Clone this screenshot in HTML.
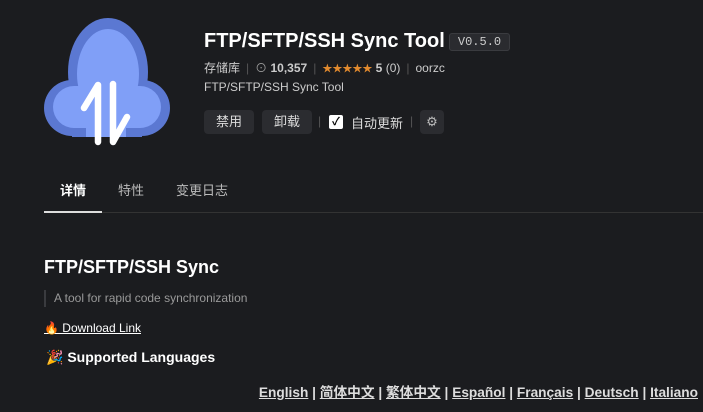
<!DOCTYPE html>
<html><head><meta charset="utf-8"><style>
*{margin:0;padding:0;box-sizing:border-box}
body{width:703px;height:412px;overflow:hidden;background:#1b1c1f;color:#ccc;font-family:"Liberation Sans","Noto Sans CJK SC",sans-serif;position:relative}
.a{position:absolute;white-space:nowrap}
.btn{position:absolute;top:110px;height:24px;background:#2b2c30;border-radius:4px;color:#ddd;font-size:13px;line-height:24px;text-align:center}
.sep{color:#555;margin:0 6px}
</style></head><body>
<svg class="a" style="left:0;top:0" width="200" height="160" viewBox="0 0 200 160">
<g fill="#5b78d2">
<ellipse cx="108" cy="72" rx="40" ry="54"/>
<circle cx="72" cy="108" r="28"/>
<circle cx="142" cy="108" r="28"/>
<rect x="72" y="80" width="70" height="57"/>
</g>
<g fill="#809ff7">
<ellipse cx="108" cy="74" rx="31" ry="45"/>
<circle cx="74" cy="107" r="21"/>
<circle cx="140" cy="107" r="21"/>
<rect x="74" y="86" width="66" height="42"/>
<rect x="86" y="110" width="40" height="27"/>
</g>
<path d="M84 108 L98 85 L98 142 M113 84 L113 142 L127 117" stroke="#fff" stroke-width="6.5" fill="none" stroke-linecap="round" stroke-linejoin="round"/>
</svg>
<div class="a" style="left:204px;top:30px;font-size:20px;font-weight:bold;color:#fff">FTP/SFTP/SSH Sync Tool</div>
<div class="a" style="left:449px;top:33px;width:61px;height:18px;background:#2a2b2f;border:1px solid #3a3b3f;border-radius:3px;font-family:'Liberation Mono',monospace;font-size:12px;line-height:16px;text-align:center;color:#ccc">V0.5.0</div>
<div class="a" style="left:204px;top:59px;font-size:12px;color:#ccc">存储库<span class="sep">|</span><span style="color:#999">⊙</span> <b>10,357</b><span class="sep">|</span><span style="color:#e28a2e;font-size:10px">★★★★★</span> <b>5</b> (0)<span class="sep">|</span>oorzc</div>
<div class="a" style="left:204px;top:80px;font-size:12px;color:#ccc">FTP/SFTP/SSH Sync Tool</div>
<div class="btn" style="left:204px;width:50px">禁用</div>
<div class="btn" style="left:262px;width:50px">卸载</div>
<div class="a" style="left:318px;top:114px;color:#555;font-size:12px">|</div>
<div class="a" style="left:329px;top:115px;width:14px;height:14px;background:#fff;border-radius:2px;color:#000;font-size:11px;line-height:14px;text-align:center;font-weight:bold">✓</div>
<div class="a" style="left:351px;top:113px;font-size:13px;color:#ddd">自动更新</div>
<div class="a" style="left:410px;top:114px;color:#555;font-size:12px">|</div>
<div class="btn" style="left:420px;width:24px;color:#bbb;font-size:13px">⚙</div>
<div class="a" style="left:60px;top:180px;font-size:13px;color:#fff;font-weight:bold">详情</div>
<div class="a" style="left:118px;top:180px;font-size:13px;color:#bbb">特性</div>
<div class="a" style="left:176px;top:180px;font-size:13px;color:#bbb">变更日志</div>
<div class="a" style="left:44px;top:212px;width:659px;height:1px;background:#333"></div>
<div class="a" style="left:44px;top:211px;width:58px;height:2px;background:#ddd"></div>
<div class="a" style="left:44px;top:257px;font-size:18px;font-weight:bold;color:#fff">FTP/SFTP/SSH Sync</div>
<div class="a" style="left:44px;top:290px;width:2px;height:17px;background:#3a3b3f"></div>
<div class="a" style="left:54px;top:291px;font-size:12px;color:#999">A tool for rapid code synchronization</div>
<div class="a" style="left:44px;top:321px;font-size:12px;color:#fff;text-decoration:underline">🔥 Download Link</div>
<div class="a" style="left:46px;top:349px;font-size:14px;font-weight:bold;color:#fff">🎉 Supported Languages</div>
<div class="a" style="right:5px;top:381px;font-size:13.7px;font-weight:bold;color:#ddd"><u>English</u> | <u>简体中文</u> | <u>繁体中文</u> | <u>Español</u> | <u>Français</u> | <u>Deutsch</u> | <u>Italiano</u></div>
</body></html>
